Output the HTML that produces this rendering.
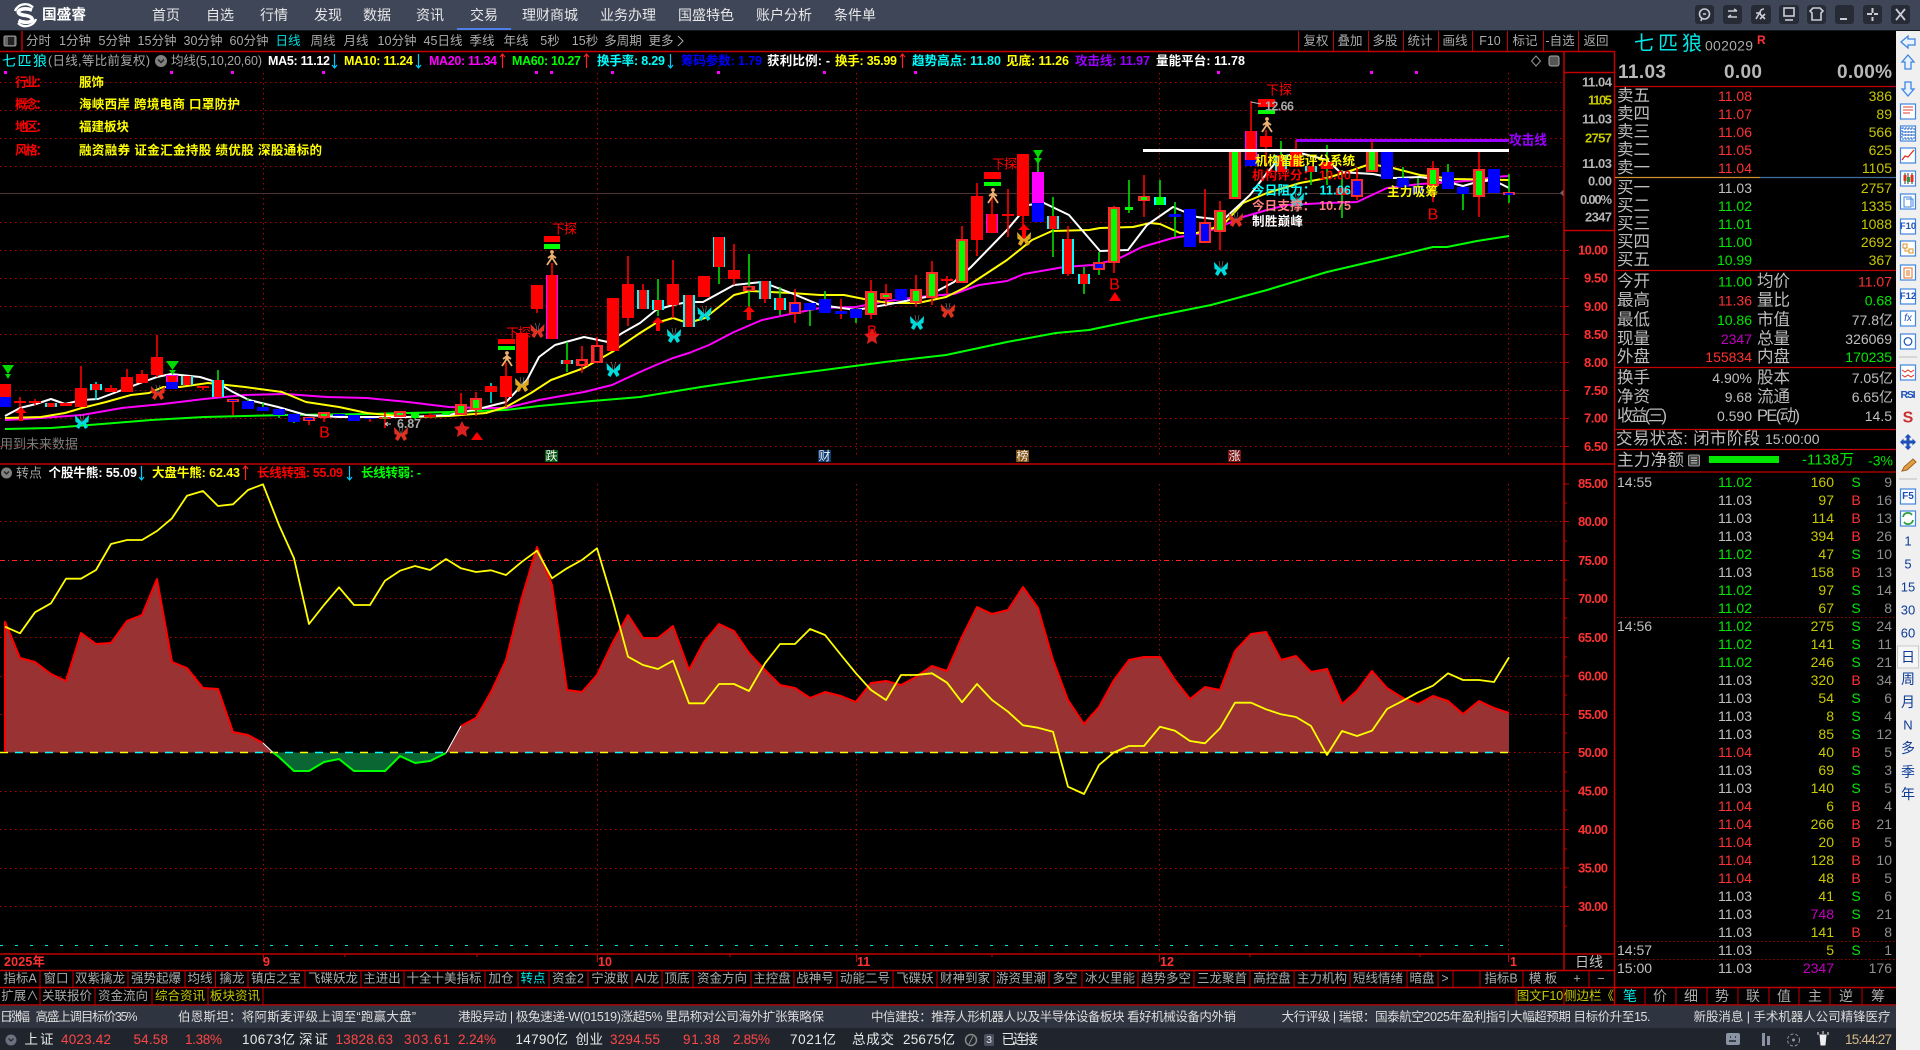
<!DOCTYPE html>
<html lang="zh"><head><meta charset="utf-8"><title>国盛睿</title>
<style>
html,body{margin:0;padding:0;background:#000;width:1920px;height:1050px;overflow:hidden}
svg{display:block;position:absolute;left:0;top:0}
text{font-family:"Liberation Sans","WenQuanYi Zen Hei","Noto Sans CJK SC",sans-serif;dominant-baseline:central;font-size:13px;fill:#bcbcbc}
.m{text-anchor:middle}.e{text-anchor:end}
.b{font-weight:bold}
.nav{font-size:14px;fill:#e8e8e8;text-anchor:middle}
.tb{font-size:12.5px;fill:#ababab;text-anchor:middle}
.hd{font-size:12.5px;font-weight:bold}
.ax{font-size:13px;font-weight:bold;fill:#ff3232;text-anchor:end}
.axg{font-size:13px;font-weight:bold;fill:#b4b4b4;text-anchor:end}
.axy{font-size:13px;font-weight:bold;fill:#c8c800;text-anchor:end}
.lb{font-size:16.5px;fill:#bdbdbd}
.n{font-size:14px;fill:#c0c0c0;text-anchor:end}
.nl{font-size:14px;fill:#c0c0c0}
.r{fill:#ff3232}.g{fill:#00e800}.y{fill:#c8c800}.p{fill:#c000c0}.c{fill:#00e8e8}.d{fill:#909090}
.tk{font-size:12.5px;fill:#dcdcdc}
.st{font-size:13.5px;fill:#e8e8e8}
.str{font-size:13.5px;fill:#ff4646}
.sb{font-size:13px;fill:#0c3c96;text-anchor:middle}
</style></head><body>
<svg width="1920" height="1050" viewBox="0 0 1920 1050" xmlns="http://www.w3.org/2000/svg">
<defs>
<g id="bf"><path d="M0 1L-7-6L-6.5 1L-4 2L-6 6L-3 8L0 3L3 8L6 6L4 2L6.500 1L7-6Z"/><path d="M-.5 1L-2-7M.5 1L2-7" stroke="#888" stroke-width=".6" fill="none"/></g>
<g id="pp" fill="none" stroke="#eeb070" stroke-width="1.800"><circle cx="0" cy="-6" r="1" fill="#eeb070"/><path d="M-5 7L-1 1L0-4L1 1L5 7M-4 0L0-3L4 0"/></g>
<path id="st" d="M0-8L2.500-3L8-2L4 2L5 8L0 5L-5 8L-4 2L-8-2L-2.500-3Z"/>
</defs>
<rect width="1920" height="1050" fill="#000"/>

<!-- title bar -->
<rect width="1920" height="30.500" fill="#3e4658"/>
<rect x="457" y="28" width="54" height="2.500" fill="#4d80e6"/>
<path d="M33 7.500A11 11 0 0 0 15 11M18 23A11 11 0 0 0 36 19" fill="none" stroke="#fff" stroke-width="2.400"/>
<path d="M32 10Q26 8 21 9.500Q17 11 19 13.500Q21 15 26 15.500Q31 16.500 32 18.500Q33 21 29 22Q24 23 18.500 20.500" fill="none" stroke="#fff" stroke-width="3.600"/>
<text x="42" y="15.500" font-size="14.500" class="b" style="font-size:14.500px;fill:#fff" textLength="44" lengthAdjust="spacingAndGlyphs">国盛睿</text>
<text x="166" y="15" class="nav">首页</text><text x="220" y="15" class="nav">自选</text><text x="274" y="15" class="nav">行情</text><text x="328" y="15" class="nav">发现</text><text x="377" y="15" class="nav">数据</text><text x="430" y="15" class="nav">资讯</text><text x="484" y="15" class="nav">交易</text><text x="550" y="15" class="nav">理财商城</text><text x="628" y="15" class="nav">业务办理</text><text x="706" y="15" class="nav">国盛特色</text><text x="784" y="15" class="nav">账户分析</text><text x="855" y="15" class="nav">条件单</text>
<g fill="#262b36"><rect x="1695" y="5" width="19" height="19" rx="3"/><rect x="1723" y="5" width="19" height="19" rx="3"/><rect x="1751" y="5" width="20" height="19" rx="3"/><rect x="1779" y="5" width="20" height="19" rx="3"/><rect x="1807" y="5" width="19" height="19" rx="3"/><rect x="1835" y="5" width="19" height="19" rx="3"/><rect x="1863" y="5" width="19" height="19" rx="3"/><rect x="1891" y="5" width="19" height="19" rx="3"/></g>
<g fill="none" stroke="#c8cdd6" stroke-width="1.600">
<circle cx="1704.500" cy="14" r="5"/><path d="M1702 18l-1 3M1703 14h3"/>
<path d="M1728 11h9M1734 9l3 2M1728 17h9M1731 15l-3 2"/>
<path d="M1756 19l4-7q1-3 4-3M1756 13h5M1760 14l5 5M1765 14l-5 5"/>
<rect x="1784" y="8" width="10" height="8"/><path d="M1785 20h8"/>
<path d="M1813 8l-3 3 2 2v7h9v-7l2-2-3-3h-7z"/>
<path d="M1840 19h7" stroke-width="2"/>
<path d="M1872.500 8v5M1872.500 17v4M1867 14h5M1874 14h4" stroke-width="2"/>
<path d="M1896 9l9 11M1905 9l-9 11" stroke-width="1.800"/>
</g>
<rect y="30" width="1920" height="1" fill="#15181f"/>

<!-- sidebar -->
<rect x="1896" y="31" width="24" height="1019" fill="#f0f0f0"/>

<!-- grid upper -->
<g stroke="#b40000" stroke-width="1" stroke-dasharray="1.500 3.500" fill="none">
<path d="M0 82.500H1564M0 110.500H1564M0 138.500H1564M0 166.500H1564M0 222.500H1564M0 250.500H1564M0 278.500H1564M0 306.500H1564M0 334.500H1564M0 362.500H1564M0 390.500H1564M0 418.500H1564M0 446.500H1564"/>
<path d="M263.500 73V456M597.500 73V456M856.500 73V456M1159.500 73V456M1508.500 73V456"/>
<path d="M0 521.500H1564M0 598.500H1564M0 637.500H1564M0 676.500H1564M0 714.500H1564M1509 752.500H1564M0 791.500H1564M0 829.500H1564M0 868.500H1564M0 906.500H1564"/>
<path d="M263.500 484V954M597.500 484V954M856.500 484V954M1159.500 484V954M1508.500 484V954"/>
</g>
<path d="M0 560.500H1564" stroke="#ff2020" stroke-dasharray="5 3 1 3"/>
<path d="M0 193.500H1564" stroke="#503232" stroke-width="1"/>
<path d="M1564 189l-4 4 4 4z" fill="#666"/>

<!-- MA lines -->
<g fill="none" stroke-width="2" stroke-linejoin="round">
<polyline stroke="#00ff00" points="5,429 51,428 102,424 151,420 204,417 286,415 367,414 449,412 506,410 539,406 592,401 640,397 701,387 762,378 824,370 885,362 946,355 1007,342 1056,333 1089,330 1146,318 1211,305 1267,290 1327,272 1387,258 1433,247 1447,247 1477,241 1509,236"/>
<polyline stroke="#ff00ff" points="5,420 41,418 82,415 122,408 163,404 204,399 245,395 286,394 327,397 367,398 408,402 449,407 482,408 506,408 539,400 584,392 612,385 640,372 656,365 673,358 689,353 709,345 734,332 762,320 795,313 820,308 856,307 881,302 918,297 954,294 979,285 1007,281 1024,274 1064,267 1093,265 1118,259 1142,247 1173,238 1203,233 1220,227 1243,217 1267,210 1287,205 1327,203 1357,202 1387,188 1420,184 1453,182 1477,180 1493,177 1509,176"/>
<polyline stroke="#ffff00" points="5,418 41,417 65,413 82,408 106,402 131,395 149,393 163,387 180,387 208,383 245,387 282,392 306,402 339,407 367,413 408,417 449,416 486,413 506,407 531,393 551,380 584,368 612,352 640,333 656,323 673,318 688,323 705,318 734,295 750,291 791,293 820,295 844,295 869,300 889,303 918,303 946,297 966,287 1007,260 1032,240 1052,231 1089,230 1100,228 1133,227 1150,223 1160,224 1180,233 1197,233 1223,225 1243,203 1267,193 1300,183 1327,178 1353,170 1370,164 1393,168 1420,175 1453,179 1509,180"/>
<polyline stroke="#ffffff" points="5,416 20,408 36,404 51,399 65,404 82,400 98,399 122,390 143,382 157,377 171,374 200,377 216,382 233,392 249,400 278,407 306,415 339,417 367,417 408,417 449,415 482,408 506,402 527,380 539,357 555,345 584,337 608,342 624,332 640,323 656,310 673,305 688,302 703,302 734,285 762,282 791,293 820,305 856,310 885,305 926,297 954,282 971,267 1007,230 1028,205 1044,203 1069,215 1100,251 1128,250 1147,225 1173,207 1197,217 1223,220 1250,195 1267,173 1280,157 1300,153 1327,160 1340,172 1373,174 1393,178 1420,177 1440,180 1463,186 1477,182 1493,180 1509,188"/>
</g>

<!-- wicks -->
<g fill="none" stroke-width="1.600">
<path stroke="#ff0000" d="M20 397V407M35 399V405M81 366V407M127 369V392M142 370V383M157 335V377M111 385V392M203 386V390M233 402V415M309 417V425M324 412V422M370 418V422M385 412V428M430 413V418M461 393V415M476 392V416M506 363V407M537 285V313M552 263V275M582 346V373M597 337V363M628 256V326M643 284V300M673 260V318M734 244V285M765 281V303M795 289V323M841 299V319M871 280V319M886 284V305M916 275V307M932 261V305M947 276V294M962 226V283M977 183V256M992 195V233M1008 189V237M1023 154V226M1068 226V276M1114 206V273M1144 175V217M1205 189V222M1220 201V250M1251 101V131M1266 130V167M1296 140V152M1357 168V200M1372 142V152M1433 161V202M1479 152V217"/>
<path stroke="#00e000" d="M218 370V380M248 398V401M263 403V407M279 415V418M294 422V423M415 418V419M567 342V372M658 279V316M719 267V284M749 254V307M780 287V315M810 310V326M825 291V299M856 318V323M1038 153V172M1053 197V257M1084 267V294M1099 252V275M1129 180V213M1160 180V197M1175 202V237M1311 172V185M1327 145V185M1342 170V218M1281 141V155M1403 167V178M1418 178V186M1448 164V172M1463 194V210M1509 174V203"/>
<path stroke="#00e8e8" d="M96 382V400M491 383V403"/>
</g>

<!-- bodies -->
<g fill="none" stroke-width="12">
<path stroke="#ff0000" d="M5 384V397M20 401V403M35 401V403M66 403V406M81 388V407M111 388V392M127 377V392M142 374V383M157 357V375M203 386V388M430 415V417M491 386V392M506 376V397M522 333V373M537 285V309M613 298V351M628 284V318M673 284V305M704 276V297M734 270V279M947 279V281M977 196V240M1008 214V216M1023 154V216M1266 136V147M1296 151V167M1327 162V169M1342 188V195"/>
<path stroke="#00ffff" d="M51 403V407M96 384V390M187 376V385M218 380V397M567 360V364M643 290V309M658 300V310M689 295V327M719 237V267M765 281V299M780 298V310M1053 216V229M1068 239V274M1084 274V284M1160 197V205M1281 155V172M1311 166V172"/>
<path stroke="#ff0000" stroke-width="8" d="M51 403V407M96 384V390M187 376V385M218 380V397M567 360V364M643 290V309M658 300V310M689 295V327M765 281V299M780 298V310M1053 216V229M1068 239V274M1084 274V284M1281 155V172M1311 166V172"/>
<path stroke="#ff0000" stroke-width="10" d="M719 237V267"/>
<path stroke="#00ff00" stroke-width="8" d="M415 413V418M446 412V415M1129 207V210M1160 197V205"/>
<path stroke="#ff2a2a" d="M324 412V418M385 417V419M400 411V417M461 404V415M476 398V410M582 359V366M597 345V363M749 286V291M871 291V315M886 293V299M916 289V303M932 272V298M962 239V283M1114 207V263M1144 196V201M1220 210V232M1235 150V199M1372 152V172M1433 168V186M1479 169V197"/>
<path stroke="#00ff00" stroke-width="6" d="M324 414V416M385 417.500V418.500M400 413V415M461 406V413M476 400V408M871 293V313M886 295V297M916 291V301M932 274V296M962 241V281M1114 209V261M1144 197V200M1220 212V230M1235 150V197M1372 152V170M1433 170V184M1479 171V195"/>
<path stroke="#000" stroke-width="5" d="M582 361V364M597 347V361M749 287.500V289.500"/>
<path stroke="#0000ff" d="M5 397V407M172 382V389M248 401V409M263 407V411M279 409V415M294 414V422M339 414V416M354 415V421M370 418V419M810 303V310M825 299V313M841 311V314M856 309V318M901 289V300M1038 203V222M1175 214V217M1190 209V247M1251 160V166M1387 152V179M1403 178V187M1418 186V194M1448 172V189M1463 187V194M1494 169V193"/>
<path stroke="#ff2a2a" d="M233 399V402M309 417V421M795 302V314M1099 262V270M1205 222V243M1357 179V197M1509 192V195"/>
<path stroke="#0000ff" stroke-width="8" d="M233 400V401M309 418V420M795 304V312M1099 264V268M1205 224V241M1357 181V195M1509 193V195"/>
<path stroke="#ff00ff" d="M172 375V382M552 275V339M992 214V233M1038 172V203M1251 131V160"/>
<path stroke="#ff0000" stroke-width="9.500" d="M172 376V382M552 275V339M992 214V233M1251 131V160"/>
</g>

<!-- overlays upper -->
<rect x="1143" y="149" width="366" height="3" fill="#fff"/>
<rect x="1296" y="139" width="213" height="3" fill="#9900ff"/>
<path d="M1296 140v9M1372 140v9" stroke="#ff0000"/>
<text x="1509" y="140" font-weight="bold" style="font-size:14px;fill:#9900ff" textLength="38" lengthAdjust="spacingAndGlyphs">攻击线</text>
<g fill="#ff0000"><rect x="544" y="236" width="16" height="6"/><rect x="498" y="339" width="17" height="5"/><rect x="984" y="172" width="17" height="7"/><rect x="1258" y="99" width="17" height="8"/></g>
<g fill="#00ff00"><rect x="544" y="244" width="16" height="5"/><rect x="498" y="346" width="17" height="4"/><rect x="984" y="182" width="17" height="4"/><rect x="1258" y="110" width="17" height="4"/></g>
<use href="#pp" x="552" y="258"/><use href="#pp" x="507" y="359"/><use href="#pp" x="993" y="196"/><use href="#pp" x="1267" y="125"/>
<g style="fill:#f00"><text x="552" y="229" style="font-size:13px;fill:#f00" textLength="25">下探</text><text x="506" y="333" style="font-size:13px;fill:#f00" textLength="25">下探</text><text x="992" y="164" style="font-size:13px;fill:#f00" textLength="25">下探</text><text x="1266" y="90" style="font-size:13px;fill:#f00" textLength="26">下探</text></g>
<path d="M1251 102l10 2" stroke="#bbb"/><text x="1265" y="106.500" class="b" style="font-size:12.500px;fill:#aaa" textLength="29">12.66</text>
<path d="M385 424h6M385 424l3-2M385 424l3 2" stroke="#ccc" fill="none"/><text x="397" y="424" class="b" style="font-size:12.500px;fill:#aaa" textLength="24">6.87</text>
<text x="0" y="444" style="font-size:13px;fill:#7c7c7c" textLength="78">用到未来数据</text>
<g fill="#00dcdc"><use href="#bf" x="82" y="421"/><use href="#bf" x="613.500" y="369"/><use href="#bf" x="674" y="335"/><use href="#bf" x="704.500" y="313"/><use href="#bf" x="917" y="322"/><use href="#bf" x="1221" y="268"/><use href="#bf" x="1297" y="199"/></g>
<g fill="#e03020"><use href="#bf" x="158" y="392"/><use href="#bf" x="401" y="433"/><use href="#bf" x="537.500" y="330"/><use href="#bf" x="948" y="310"/><use href="#bf" x="1236" y="219"/></g>
<g fill="#e0a820"><use href="#bf" x="522" y="384"/><use href="#bf" x="1024" y="238"/></g>
<g fill="#d82020"><use href="#st" x="462" y="429"/><use href="#st" x="872" y="336"/></g>
<path d="M15 413l6-6 6 6h-4v8h-4v-8zM652 323l6-6 6 6h-4v8h-4v-8zM743 312l6-6 6 6h-4v8h-4v-8zM1018 230l6-6 6 6h-4v8h-4v-8zM471 440l6-8 6 8zM1109 301l6-9 6 9z" fill="#f00"/>
<path d="M2 365h12l-6 9zM5 374h6l-3 5zM166 361h13l-6.500 9zM169 370h7l-3.500 5zM1033 150h10l-5 8zM1034 158h8l-4 6z" fill="#00d800"/>
<text x="324.500" y="433" class="m" style="font-size:16px;fill:#f00">B</text><text x="872" y="331" class="m" style="font-size:15px;fill:#f00">B</text><text x="1114.500" y="285" class="m" style="font-size:16px;fill:#f00">B</text><text x="1433" y="215" class="m" style="font-size:16px;fill:#f00">B</text>
<text x="1255" y="161" class="b" style="font-size:12.500px;fill:#ff0" textLength="100">机构智能评分系统</text>
<text x="1252" y="175.500" class="b" style="font-size:12.500px;fill:#f00" textLength="99">机构评分： 10.00</text>
<text x="1252" y="190.500" class="b" style="font-size:12.500px;fill:#0ff" textLength="99">今日阻力： 11.06</text>
<text x="1252" y="206" class="b" style="font-size:12.500px;fill:#ff8080" textLength="99">今日支撑： 10.75</text>
<text x="1252" y="221.500" class="b" style="font-size:12.500px;fill:#fff" textLength="51">制胜巅峰</text>
<text x="1387" y="192" class="b" style="font-size:12.500px;fill:#ff0" textLength="51">主力吸筹</text>
<g><rect x="545" y="450" width="13" height="12" fill="#0a5a14"/><rect x="818" y="450" width="13" height="12" fill="#0a3a70"/><rect x="1016" y="450" width="13" height="12" fill="#80500e"/><rect x="1228" y="450" width="13" height="12" fill="#7a1010"/></g>
<g style="font-size:12px"><text x="551.500" y="456" class="m" style="font-size:12px;fill:#eee">跌</text><text x="824.500" y="456" class="m" style="font-size:12px;fill:#eee">财</text><text x="1022.500" y="456" class="m" style="font-size:12px;fill:#eee">榜</text><text x="1234.500" y="456" class="m" style="font-size:12px;fill:#eee">涨</text></g>
<path d="M4 71h3v3H4zM170 71h3v3h-3zM231 71h3v3h-3zM322 71h3v3h-3zM535 71h3v3h-3zM550 71h3v3h-3zM611 71h3v3h-3zM717 71h3v3h-3zM823 71h3v3h-3zM914 71h3v3h-3zM1217 71h3v3h-3zM1370 71h3v3h-3zM1415 71h3v3h-3z" fill="#f0f"/>

<!-- chart info text -->
<g class="hd">
<text x="15" y="82.500" class="hd" style="fill:#f00" textLength="33">行业：</text><text x="79" y="82.500" class="hd" style="fill:#ff0" textLength="25">服饰</text>
<text x="15" y="104.500" class="hd" style="fill:#f00" textLength="33">概念：</text><text x="79" y="104.500" class="hd" style="fill:#ff0" textLength="161">海峡西岸 跨境电商 口罩防护</text>
<text x="15" y="127" class="hd" style="fill:#f00" textLength="33">地区：</text><text x="79" y="127" class="hd" style="fill:#ff0" textLength="50">福建板块</text>
<text x="15" y="150.500" class="hd" style="fill:#f00" textLength="33">风格：</text><text x="79" y="150.500" class="hd" style="fill:#ff0" textLength="243">融资融券 证金汇金持股 绩优股 深股通标的</text>
</g>

<!-- header row -->
<text x="2" y="61" style="font-size:14px;fill:#0ff" textLength="45">七匹狼</text>
<text x="48" y="61" style="font-size:12.500px;fill:#a8a8a8" textLength="102">(日线,等比前复权)</text>
<circle cx="161" cy="61" r="6" fill="#808080"/><path d="M158 59.500l3 3 3-3" stroke="#222" stroke-width="1.500" fill="none"/>
<text x="171" y="61" style="font-size:12.500px;fill:#a8a8a8" textLength="91">均线(5,10,20,60)</text>
<text x="268" y="61" class="hd" style="fill:#fff" textLength="62">MA5: 11.12</text>
<text x="344" y="61" class="hd" style="fill:#ff0" textLength="69">MA10: 11.24</text>
<text x="429" y="61" class="hd" style="fill:#f0f" textLength="68">MA20: 11.34</text>
<text x="512" y="61" class="hd" style="fill:#0f0" textLength="69">MA60: 10.27</text>
<text x="597" y="61" class="hd" style="fill:#0ff" textLength="68">换手率: 8.29</text>
<text x="681" y="61" class="hd" style="fill:#0000ff" textLength="81">筹码参数: 1.79</text>
<text x="767" y="61" class="hd" style="fill:#fff" textLength="63">获利比例: -</text>
<text x="835" y="61" class="hd" style="fill:#ff0" textLength="62">换手: 35.99</text>
<text x="912" y="61" class="hd" style="fill:#0ff" textLength="89">趋势高点: 11.80</text>
<text x="1006" y="61" class="hd" style="fill:#ff0" textLength="63">见底: 11.26</text>
<text x="1075" y="61" class="hd" style="fill:#9900ff" textLength="75">攻击线: 11.97</text>
<text x="1156" y="61" class="hd" style="fill:#fff" textLength="89">量能平台: 11.78</text>
<g fill="none" stroke-width="1.200">
<path stroke="#0cf" d="M334.500 54V68M332 65l2.500 3 2.500-3M418.500 54V68M416 65l2.500 3 2.500-3M670.500 54V68M668 65l2.500 3 2.500-3M141.500 466V480M139 477l2.500 3 2.500-3M349.500 466V480M347 477l2.500 3 2.500-3"/>
<path stroke="#f22" d="M502.500 54V68M500 57l2.500-3 2.500 3M586.500 54V68M584 57l2.500-3 2.500 3M902.500 54V68M900 57l2.500-3 2.500 3M245.500 466V480M243 469l2.500-3 2.500 3"/>
</g>
<path d="M1536 56l4.500 5-4.500 5-4.500-5z" fill="none" stroke="#999"/><rect x="1549" y="56" width="10" height="10" rx="2" fill="#555" stroke="#aaa"/>

<!-- toolbar -->
<rect x="4" y="36" width="12" height="10" rx="1.500" fill="#666" stroke="#999"/><rect x="8" y="37" width="6" height="8" fill="#222"/>
<path d="M22 31V51" stroke="#c40000" stroke-width="1.500"/>
<text x="38.500" y="41" class="tb">分时</text><text x="75" y="41" class="tb">1分钟</text><text x="114.500" y="41" class="tb">5分钟</text><text x="157" y="41" class="tb">15分钟</text><text x="203" y="41" class="tb">30分钟</text><text x="249" y="41" class="tb">60分钟</text><text x="288" y="41" class="tb" style="fill:#00e0e0">日线</text><text x="323" y="41" class="tb">周线</text><text x="356" y="41" class="tb">月线</text><text x="397" y="41" class="tb">10分钟</text><text x="443" y="41" class="tb">45日线</text><text x="482" y="41" class="tb">季线</text><text x="516" y="41" class="tb">年线</text><text x="550" y="41" class="tb">5秒</text><text x="585" y="41" class="tb">15秒</text><text x="623" y="41" class="tb">多周期</text><text x="661" y="41" class="tb">更多</text><path d="M678 36l5 5-5 5" fill="none" stroke="#aaa"/>
<text x="1316" y="41" class="tb">复权</text><text x="1350" y="41" class="tb">叠加</text><text x="1385" y="41" class="tb">多股</text><text x="1420" y="41" class="tb">统计</text><text x="1455" y="41" class="tb">画线</text><text x="1490" y="41" class="tb">F10</text><text x="1525" y="41" class="tb">标记</text><text x="1560" y="41" class="tb">-自选</text><text x="1596" y="41" class="tb">返回</text>
<path d="M1298.500 31V51M1333.500 31V51M1368.500 31V51M1403.500 31V51M1438.500 31V51M1472.500 31V51M1507.500 31V51M1543.500 31V51M1578.500 31V51" stroke="#c40000"/>

<!-- lower indicator -->
<polygon fill="#993232" points="5,752.500 5,621.700 20,658 35,662 51,674 66,681 81,633 96,644 111,643 127,621 142,615 157,579 172,662 187,668 203,688 218,689 233,732 248,735 263,743 273,752.500"/>
<polygon fill="#993232" points="446,752.500 461,726 476,718 491,692 506,660 522,597 537,547 552,585 567,690 582,692 597,675 613,642 628,615 643,638 658,638 673,626 689,670 704,642 719,624 734,631 749,653 765,670 780,685 795,688 810,698 825,692 841,696 856,702 871,683 886,681 901,685 916,677 932,666 947,671 962,637 977,607 992,614 1008,610 1023,587 1038,608 1053,660 1068,700 1084,724 1099,707 1114,680 1129,660 1144,657 1160,657 1175,680 1190,699 1205,687 1220,690 1235,651 1251,634 1266,632 1281,660 1296,656 1311,672 1327,669 1342,704 1357,691 1372,671 1387,688 1403,698 1418,704 1433,696 1448,701 1463,714 1479,701 1494,708 1509,713 1509,752.500"/>
<polygon fill="#0a6632" points="273,752.500 279,757 294,771 309,771 324,762 339,759 354,771 370,771 385,771 400,756 415,763 430,761 446,753"/>
<path d="M0 752.500H1509" stroke="#ffff00" stroke-width="1.500" stroke-dasharray="8 22"/>
<path d="M15 752.500H1509" stroke="#00ffff" stroke-width="1.500" stroke-dasharray="8 22"/>
<path d="M0 945.500H1509" stroke="#00e0e0" stroke-dasharray="3 12"/>
<g fill="none" stroke-width="2" stroke-linejoin="round">
<polyline stroke="#ff0000" points="5,752 5,621.700 20,658 35,662 51,674 66,681 81,633 96,644 111,643 127,621 142,615 157,579 172,662 187,668 203,688 218,689 233,732 248,735 263,743"/>
<polyline stroke="#ff0000" points="461,726 476,718 491,692 506,660 522,597 537,547 552,585 567,690 582,692 597,675 613,642 628,615 643,638 658,638 673,626 689,670 704,642 719,624 734,631 749,653 765,670 780,685 795,688 810,698 825,692 841,696 856,702 871,683 886,681 901,685 916,677 932,666 947,671 962,637 977,607 992,614 1008,610 1023,587 1038,608 1053,660 1068,700 1084,724 1099,707 1114,680 1129,660 1144,657 1160,657 1175,680 1190,699 1205,687 1220,690 1235,651 1251,634 1266,632 1281,660 1296,656 1311,672 1327,669 1342,704 1357,691 1372,671 1387,688 1403,698 1418,704 1433,696 1448,701 1463,714 1479,701 1494,708 1509,713"/>
<polyline stroke="#00ff00" points="273,752.500 279,757 294,771 309,771 324,762 339,759 354,771 370,771 385,771 400,756 415,763 430,761 446,753"/>
<polyline stroke="#ffff00" stroke-width="1.800" points="5,626.700 20,633.300 35,612.300 51,603.300 66,578.700 81,578.700 96,570 111,544 127,540 142,540 157,531 172,518.300 187,495.700 203,491 218,506 233,504.300 248,490 263,484.300 279,525 294,558.300 309,624 324,605 339,587.300 354,605 370,605 385,580.700 400,570.700 415,566 430,570 446,559 461,568.300 476,572 491,570.300 506,575 522,561.700 537,550.700 552,578.300 567,568.300 582,560 597,548.300 613,601.700 628,656.700 643,665 658,669 673,660.700 689,703.300 704,703.300 719,684 734,684 749,691 765,663.300 780,644 795,644 810,629 825,635 841,655 856,673.300 871,690 886,700 901,675 916,675 932,673.300 947,682.700 962,702.300 977,684 992,700 1008,711.700 1023,725.300 1038,727.700 1053,731.700 1068,786.700 1084,794 1099,765 1114,752.300 1129,746 1144,746 1160,726.700 1175,730.700 1190,741 1205,743.300 1220,728.300 1235,702.700 1251,702.700 1266,709.300 1281,714.300 1296,717 1311,726 1327,755 1342,731 1357,736 1372,730.700 1387,709 1403,700.700 1418,692.300 1433,685.700 1448,673.300 1463,680 1479,680 1494,682 1509,657.300"/>
<path d="M263 743L273 752.500M446 753L461 726" stroke="#fff" stroke-width="1"/>
</g>
<circle cx="6.500" cy="473" r="5.500" fill="#808080"/><path d="M4 471.500l2.500 2.500 2.500-2.500" stroke="#222" stroke-width="1.300" fill="none"/>
<text x="16" y="473" style="font-size:13px;fill:#a8a8a8" textLength="26">转点</text>
<text x="48.500" y="473" class="hd" style="fill:#fff" textLength="88.500">个股牛熊: 55.09</text>
<text x="152" y="473" class="hd" style="fill:#ff0" textLength="88">大盘牛熊: 62.43</text>
<text x="257" y="473" class="hd" style="fill:#f00" textLength="86">长线转强: 55.09</text>
<text x="361" y="473" class="hd" style="fill:#0f0" textLength="60">长线转弱: -</text>

<!-- red frame lines -->
<g stroke="#c40000" fill="none">
<path d="M0 51.500H1615" stroke-width="1.500"/>
<path d="M0 464H1615" stroke-width="1.500"/>
<path d="M1564 51V970" stroke-width="1.500"/>
<path d="M1614.500 51V1005" stroke-width="1.500"/>
<path d="M1564 72.500H1615M1564 230.500H1615" stroke-width="1.500"/>
<path d="M0 954H1615" stroke-width="1.500"/>
<path d="M0 970.500H1615M0 987.500H1896M0 1005H1896" stroke-width="1.500"/>
<path d="M1615 86.500H1896M1615 270.500H1896M1615 367.500H1896M1615 429.500H1896M1615 449.500H1896M1615 472H1896" stroke-width="1.200"/>
<path d="M1617 617.500H1896M1617 941.500H1896M1617 959.500H1896" stroke="#a00000" stroke-dasharray="1.500 2.500"/>
<path d="M1564 250.500h5M1564 278.500h5M1564 306.500h5M1564 334.500h5M1564 362.500h5M1564 390.500h5M1564 418.500h5M1564 446.500h5M1564 484h5M1564 521.500h5M1564 560.500h5M1564 598.500h5M1564 637.500h5M1564 676h5M1564 714.500h5M1564 752.500h5M1564 791h5M1564 829.500h5M1564 868h5M1564 906.500h5M1564 503h3M1564 541h3M1564 580h3M1564 618h3M1564 657h3M1564 695h3M1564 733h3M1564 772h3M1564 810h3M1564 849h3M1564 887h3M1564 926h3"/>
<path d="M263.500 954v8M597.500 954v8M856.500 954v8M1159.500 954v8M1508.500 954v8M345 954v3M477 954v3M730 954v3M992 954v3M1250 954v3M1420 954v3"/>
<path d="M40 970.500V987M73 970.500V987M128 970.500V987M185 970.500V987M215.500 970.500V987M248 970.500V987M305 970.500V987M361 970.500V987M404 970.500V987M485 970.500V987M518 970.500V987M549 970.500V987M588 970.500V987M632 970.500V987M662 970.500V987M693 970.500V987M751 970.500V987M794 970.500V987M837 970.500V987M893 970.500V987M937 970.500V987M994 970.500V987M1049 970.500V987M1082 970.500V987M1138 970.500V987M1194 970.500V987M1250 970.500V987M1294 970.500V987M1350 970.500V987M1407 970.500V987M1438 970.500V987M1453 970.500V987M1480 970.500V987M1523 970.500V987M1589 970.500V987"/>
<path d="M40 987V1005M95 987V1005M152 987V1005M208 987V1005M263 987V1005M1516 987V1005M1564 987V1005M1645 987V1005M1676 987V1005M1707 987V1005M1738 987V1005M1769 987V1005M1799 987V1005M1830 987V1005M1862 987V1005"/>
</g>
<path d="M1615 177.500H1760" stroke="#d09030" stroke-width="1.200"/><path d="M1760 177.500H1896" stroke="#4070a0" stroke-width="1.200"/>

<!-- axis labels -->
<text x="1612" y="82" class="axg" textLength="30">11.04</text><text x="1612" y="100" class="axy" textLength="24">1105</text><text x="1612" y="119" class="axg" textLength="30">11.03</text><text x="1612" y="138" class="axy" textLength="27">2757</text><text x="1612" y="163.500" class="axg" textLength="30">11.03</text><text x="1612" y="181" class="axg" textLength="24">0.00</text><text x="1612" y="199.500" class="axg" textLength="32">0.00%</text><text x="1612" y="217" class="axg" textLength="27">2347</text>
<g>
<text x="1608" y="250" class="ax" textLength="30">10.00</text><text x="1608" y="278" class="ax" textLength="24">9.50</text><text x="1608" y="306.500" class="ax" textLength="24">9.00</text><text x="1608" y="334.500" class="ax" textLength="24">8.50</text><text x="1608" y="362.500" class="ax" textLength="24">8.00</text><text x="1608" y="390.500" class="ax" textLength="24">7.50</text><text x="1608" y="418" class="ax" textLength="24">7.00</text><text x="1608" y="446.500" class="ax" textLength="24">6.50</text>
<text x="1608" y="483.500" class="ax" textLength="30">85.00</text><text x="1608" y="521.500" class="ax" textLength="30">80.00</text><text x="1608" y="560.500" class="ax" textLength="30">75.00</text><text x="1608" y="598.500" class="ax" textLength="30">70.00</text><text x="1608" y="637.500" class="ax" textLength="30">65.00</text><text x="1608" y="676" class="ax" textLength="30">60.00</text><text x="1608" y="714.500" class="ax" textLength="30">55.00</text><text x="1608" y="752.500" class="ax" textLength="30">50.00</text><text x="1608" y="791" class="ax" textLength="30">45.00</text><text x="1608" y="829.500" class="ax" textLength="30">40.00</text><text x="1608" y="868" class="ax" textLength="30">35.00</text><text x="1608" y="906.500" class="ax" textLength="30">30.00</text>
</g>
<text x="4" y="962" class="b" style="font-size:12.500px;fill:#ff3232" textLength="41">2025年</text><text x="263" y="962" class="b" style="font-size:12.500px;fill:#ff3232">9</text><text x="598" y="962" class="b" style="font-size:12.500px;fill:#ff3232">10</text><text x="857" y="962" class="b" style="font-size:12.500px;fill:#ff3232">11</text><text x="1160" y="962" class="b" style="font-size:12.500px;fill:#ff3232">12</text><text x="1510" y="962" class="b" style="font-size:12.500px;fill:#ff3232">1</text>
<text x="1589" y="962" class="m" style="font-size:14px;fill:#c0c0c0">日线</text>

<!-- tabs -->
<g>
<text x="20" y="978.500" class="tb">指标A</text><text x="56" y="978.500" class="tb">窗口</text><text x="100" y="978.500" class="tb">双紫擒龙</text><text x="156" y="978.500" class="tb">强势起爆</text><text x="200" y="978.500" class="tb">均线</text><text x="232" y="978.500" class="tb">擒龙</text><text x="276" y="978.500" class="tb">镇店之宝</text><text x="333" y="978.500" class="tb">飞碟妖龙</text><text x="382" y="978.500" class="tb">主进出</text><text x="444" y="978.500" class="tb">十全十美指标</text><text x="501" y="978.500" class="tb">加仓</text><text x="533" y="978.500" class="tb" style="fill:#00e8e8">转点</text><text x="568" y="978.500" class="tb">资金2</text><text x="610" y="978.500" class="tb">宁波敢</text><text x="647" y="978.500" class="tb">AI龙</text><text x="677" y="978.500" class="tb">顶底</text><text x="722" y="978.500" class="tb">资金方向</text><text x="772" y="978.500" class="tb">主控盘</text><text x="815" y="978.500" class="tb">战神号</text><text x="865" y="978.500" class="tb">动能二号</text><text x="915" y="978.500" class="tb">飞碟妖</text><text x="965" y="978.500" class="tb">财神到家</text><text x="1021" y="978.500" class="tb">游资里潮</text><text x="1065" y="978.500" class="tb">多空</text><text x="1110" y="978.500" class="tb">冰火里能</text><text x="1166" y="978.500" class="tb">趋势多空</text><text x="1222" y="978.500" class="tb">三龙聚首</text><text x="1272" y="978.500" class="tb">高控盘</text><text x="1322" y="978.500" class="tb">主力机构</text><text x="1378" y="978.500" class="tb">短线情绪</text><text x="1422" y="978.500" class="tb">暗盘</text><text x="1445" y="978.500" class="tb">&gt;</text><text x="1501" y="978.500" class="tb">指标B</text><text x="1543" y="978.500" class="tb">模 板</text><text x="1577" y="978.500" class="tb">+</text><text x="1601" y="978.500" class="tb">−</text>
<text x="20" y="996" class="tb">扩展∧</text><text x="67" y="996" class="tb">关联报价</text><text x="123" y="996" class="tb">资金流向</text><text x="180" y="996" class="tb" style="fill:#c8c800">综合资讯</text><text x="235" y="996" class="tb" style="fill:#c8c800">板块资讯</text>
<text x="1540" y="996" class="tb" style="fill:#c8c800">图文F10</text><text x="1589" y="996" class="tb" style="fill:#c8c800">侧边栏《</text>
<text x="1630" y="996" class="tb" style="fill:#00e8e8;font-size:14px">笔</text><text x="1660" y="996" class="tb" style="font-size:14px">价</text><text x="1691" y="996" class="tb" style="font-size:14px">细</text><text x="1722" y="996" class="tb" style="font-size:14px">势</text><text x="1753" y="996" class="tb" style="font-size:14px">联</text><text x="1784" y="996" class="tb" style="font-size:14px">值</text><text x="1815" y="996" class="tb" style="font-size:14px">主</text><text x="1846" y="996" class="tb" style="font-size:14px">逆</text><text x="1878" y="996" class="tb" style="font-size:14px">筹</text>
</g>

<!-- ticker + status -->
<rect y="1005.500" width="1896" height="22.500" fill="#2f3540"/>
<rect y="1028" width="1896" height="22" fill="#20252d"/>
<text x="0" y="1017" class="tk" textLength="30">日涨幅</text><text x="35.500" y="1017" class="tk" textLength="102">高盛上调目标价35%</text>
<text x="178" y="1017" class="tk" textLength="238">伯恩斯坦：将阿斯麦评级上调至“跑赢大盘”</text>
<text x="458" y="1017" class="tk" textLength="366">港股异动 | 极兔速递-W(01519)涨超5% 里昂称对公司海外扩张策略保</text>
<text x="871" y="1017" class="tk" textLength="365">中信建投：推荐人形机器人以及半导体设备板块 看好机械设备内外销</text>
<text x="1281.500" y="1017" class="tk" textLength="369">大行评级 | 瑞银：国泰航空2025年盈利指引大幅超预期 目标价升至15.</text>
<text x="1693.500" y="1017" class="tk" textLength="197">新股消息 | 手术机器人公司精锋医疗</text>

<circle cx="11" cy="1040" r="5.500" fill="#6a7280"/><path d="M8.500 1038.500l2.500 2.500 2.500-2.500" stroke="#222" stroke-width="1.200" fill="none"/>
<text x="24.500" y="1039.500" class="st" textLength="29">上证</text><text x="61" y="1039.500" class="str" textLength="50">4023.42</text><text x="133.500" y="1039.500" class="str" textLength="34.500">54.58</text><text x="185" y="1039.500" class="str" textLength="37">1.38%</text><text x="242" y="1039.500" class="st" textLength="53">10673亿</text>
<text x="299" y="1039.500" class="st" textLength="29">深证</text><text x="335.500" y="1039.500" class="str" textLength="57.500">13828.63</text><text x="404" y="1039.500" class="str" textLength="46">303.61</text><text x="458" y="1039.500" class="str" textLength="38">2.24%</text><text x="515.500" y="1039.500" class="st" textLength="52.500">14790亿</text>
<text x="575.500" y="1039.500" class="st" textLength="27.500">创业</text><text x="610" y="1039.500" class="str" textLength="50">3294.55</text><text x="683" y="1039.500" class="str" textLength="37">91.38</text><text x="733" y="1039.500" class="str" textLength="37">2.85%</text><text x="790" y="1039.500" class="st" textLength="46">7021亿</text>
<text x="852" y="1039.500" class="st" textLength="42">总成交</text><text x="903" y="1039.500" class="st" textLength="52">25675亿</text>
<circle cx="971" cy="1040" r="5.500" fill="none" stroke="#888" stroke-width="1.500"/><path d="M969 1044l4-8" stroke="#888"/>
<rect x="984" y="1034" width="10" height="12" rx="2" fill="#4a5060"/><text x="989" y="1040" class="m" style="font-size:10.500px;fill:#ddd">3</text>
<text x="1001.500" y="1039.500" class="st" textLength="36.500">已连接</text>
<g fill="#8a93a3"><rect x="1726" y="1033" width="14" height="12" rx="2"/><rect x="1762" y="1033" width="3" height="13"/><rect x="1767" y="1036" width="3" height="9"/></g>
<path d="M1730 1037h1M1735 1037h1M1729 1041h7" stroke="#20252d" stroke-width="1.500"/>
<circle cx="1793.500" cy="1040" r="6" fill="none" stroke="#8a93a3" stroke-dasharray="3 2"/><circle cx="1793.500" cy="1040" r="1.500" fill="#8a93a3"/>
<path d="M1820 1035h6l-1 10h-4zM1818 1032v3M1823 1031v3M1828 1032v3" stroke="#eee" fill="#eee"/>
<text x="1845" y="1039.500" class="st" style="fill:#d9b88a" textLength="47">15:44:27</text>

<!-- right panel header -->
<text x="1634" y="44" style="font-size:20px;fill:#00e8e8" textLength="68">七匹狼</text>
<text x="1705" y="45.500" style="font-size:14px;fill:#aaa" textLength="48">002029</text>
<text x="1757" y="40" class="b" style="font-size:12px;fill:#f33">R</text>
<text x="1618" y="72.500" class="b" style="font-size:19px;fill:#b8b8b8" textLength="48">11.03</text>
<text x="1724" y="72.500" class="b" style="font-size:19px;fill:#b8b8b8" textLength="38">0.00</text>
<text x="1837" y="72.500" class="b" style="font-size:19px;fill:#b8b8b8" textLength="55">0.00%</text>

<!-- order book -->
<text x="1617" y="96" class="lb">卖五</text><text x="1752" y="96" class="n r">11.08</text><text x="1892" y="96" class="n y">386</text>
<text x="1617" y="114" class="lb">卖四</text><text x="1752" y="114" class="n r">11.07</text><text x="1892" y="114" class="n y">89</text>
<text x="1617" y="132" class="lb">卖三</text><text x="1752" y="132" class="n r">11.06</text><text x="1892" y="132" class="n y">566</text>
<text x="1617" y="150" class="lb">卖二</text><text x="1752" y="150" class="n r">11.05</text><text x="1892" y="150" class="n y">625</text>
<text x="1617" y="168" class="lb">卖一</text><text x="1752" y="168" class="n r">11.04</text><text x="1892" y="168" class="n y">1105</text>
<text x="1617" y="188" class="lb">买一</text><text x="1752" y="188" class="n">11.03</text><text x="1892" y="188" class="n y">2757</text>
<text x="1617" y="206" class="lb">买二</text><text x="1752" y="206" class="n g">11.02</text><text x="1892" y="206" class="n y">1335</text>
<text x="1617" y="224" class="lb">买三</text><text x="1752" y="224" class="n g">11.01</text><text x="1892" y="224" class="n y">1088</text>
<text x="1617" y="242" class="lb">买四</text><text x="1752" y="242" class="n g">11.00</text><text x="1892" y="242" class="n y">2692</text>
<text x="1617" y="260" class="lb">买五</text><text x="1752" y="260" class="n g">10.99</text><text x="1892" y="260" class="n y">367</text>

<text x="1617" y="281.500" class="lb">今开</text><text x="1752" y="281.500" class="n g">11.00</text><text x="1757" y="281.500" class="lb">均价</text><text x="1892" y="281.500" class="n r">11.07</text>
<text x="1617" y="300.500" class="lb">最高</text><text x="1752" y="300.500" class="n r">11.36</text><text x="1757" y="300.500" class="lb">量比</text><text x="1892" y="300.500" class="n g">0.68</text>
<text x="1617" y="320" class="lb">最低</text><text x="1752" y="320" class="n g">10.86</text><text x="1757" y="320" class="lb">市值</text><text x="1893" y="320" class="n">77.8亿</text>
<text x="1617" y="339" class="lb">现量</text><text x="1752" y="339" class="n p">2347</text><text x="1757" y="339" class="lb">总量</text><text x="1892" y="339" class="n">326069</text>
<text x="1617" y="357" class="lb">外盘</text><text x="1752" y="357" class="n r">155834</text><text x="1757" y="357" class="lb">内盘</text><text x="1892" y="357" class="n g">170235</text>
<text x="1617" y="378" class="lb">换手</text><text x="1752" y="378" class="n">4.90%</text><text x="1757" y="378" class="lb">股本</text><text x="1893" y="378" class="n">7.05亿</text>
<text x="1617" y="397" class="lb">净资</text><text x="1752" y="397" class="n">9.68</text><text x="1757" y="397" class="lb">流通</text><text x="1893" y="397" class="n">6.65亿</text>
<text x="1617" y="416" class="lb" textLength="50">收益(三)</text><text x="1752" y="416" class="n">0.590</text><text x="1757" y="416" class="lb" textLength="43">PE(动)</text><text x="1892" y="416" class="n">14.5</text>
<text x="1616" y="439" class="lb" textLength="144">交易状态: 闭市阶段</text><text x="1765" y="439" class="nl">15:00:00</text>
<text x="1617" y="460.500" class="lb" textLength="67">主力净额</text>
<rect x="1688.500" y="455" width="11" height="11" rx="1.500" fill="#444" stroke="#999"/><path d="M1691 458h6M1691 460.500h6M1691 463h6" stroke="#bbb"/>
<rect x="1709" y="456" width="70" height="7" fill="#00e800"/>
<text x="1802" y="460.500" class="nl g" style="font-size:14.500px;fill:#00e800" textLength="52">-1138万</text><text x="1893" y="460.500" class="n g">-3%</text>

<!-- ticks -->
<g>
<text x="1617" y="482" class="nl">14:55</text><text x="1752" y="482" class="n g">11.02</text><text x="1834" y="482" class="n y">160</text><text x="1856" y="482" class="nl g m">S</text><text x="1892" y="482" class="n d">9</text>
<text x="1752" y="500" class="n">11.03</text><text x="1834" y="500" class="n y">97</text><text x="1856" y="500" class="nl r m">B</text><text x="1892" y="500" class="n d">16</text>
<text x="1752" y="518" class="n">11.03</text><text x="1834" y="518" class="n y">114</text><text x="1856" y="518" class="nl r m">B</text><text x="1892" y="518" class="n d">13</text>
<text x="1752" y="536" class="n">11.03</text><text x="1834" y="536" class="n y">394</text><text x="1856" y="536" class="nl r m">B</text><text x="1892" y="536" class="n d">26</text>
<text x="1752" y="554" class="n g">11.02</text><text x="1834" y="554" class="n y">47</text><text x="1856" y="554" class="nl g m">S</text><text x="1892" y="554" class="n d">10</text>
<text x="1752" y="572" class="n">11.03</text><text x="1834" y="572" class="n y">158</text><text x="1856" y="572" class="nl r m">B</text><text x="1892" y="572" class="n d">13</text>
<text x="1752" y="590" class="n g">11.02</text><text x="1834" y="590" class="n y">97</text><text x="1856" y="590" class="nl g m">S</text><text x="1892" y="590" class="n d">14</text>
<text x="1752" y="608" class="n g">11.02</text><text x="1834" y="608" class="n y">67</text><text x="1856" y="608" class="nl g m">S</text><text x="1892" y="608" class="n d">8</text>
<text x="1617" y="626" class="nl">14:56</text><text x="1752" y="626" class="n g">11.02</text><text x="1834" y="626" class="n y">275</text><text x="1856" y="626" class="nl g m">S</text><text x="1892" y="626" class="n d">24</text>
<text x="1752" y="644" class="n g">11.02</text><text x="1834" y="644" class="n y">141</text><text x="1856" y="644" class="nl g m">S</text><text x="1892" y="644" class="n d">11</text>
<text x="1752" y="662" class="n g">11.02</text><text x="1834" y="662" class="n y">246</text><text x="1856" y="662" class="nl g m">S</text><text x="1892" y="662" class="n d">21</text>
<text x="1752" y="680" class="n">11.03</text><text x="1834" y="680" class="n y">320</text><text x="1856" y="680" class="nl r m">B</text><text x="1892" y="680" class="n d">34</text>
<text x="1752" y="698" class="n">11.03</text><text x="1834" y="698" class="n y">54</text><text x="1856" y="698" class="nl g m">S</text><text x="1892" y="698" class="n d">6</text>
<text x="1752" y="716" class="n">11.03</text><text x="1834" y="716" class="n y">8</text><text x="1856" y="716" class="nl g m">S</text><text x="1892" y="716" class="n d">4</text>
<text x="1752" y="734" class="n">11.03</text><text x="1834" y="734" class="n y">85</text><text x="1856" y="734" class="nl g m">S</text><text x="1892" y="734" class="n d">12</text>
<text x="1752" y="752" class="n r">11.04</text><text x="1834" y="752" class="n y">40</text><text x="1856" y="752" class="nl r m">B</text><text x="1892" y="752" class="n d">5</text>
<text x="1752" y="770" class="n">11.03</text><text x="1834" y="770" class="n y">69</text><text x="1856" y="770" class="nl g m">S</text><text x="1892" y="770" class="n d">3</text>
<text x="1752" y="788" class="n">11.03</text><text x="1834" y="788" class="n y">140</text><text x="1856" y="788" class="nl g m">S</text><text x="1892" y="788" class="n d">5</text>
<text x="1752" y="806" class="n r">11.04</text><text x="1834" y="806" class="n y">6</text><text x="1856" y="806" class="nl r m">B</text><text x="1892" y="806" class="n d">4</text>
<text x="1752" y="824" class="n r">11.04</text><text x="1834" y="824" class="n y">266</text><text x="1856" y="824" class="nl r m">B</text><text x="1892" y="824" class="n d">21</text>
<text x="1752" y="842" class="n r">11.04</text><text x="1834" y="842" class="n y">20</text><text x="1856" y="842" class="nl r m">B</text><text x="1892" y="842" class="n d">5</text>
<text x="1752" y="860" class="n r">11.04</text><text x="1834" y="860" class="n y">128</text><text x="1856" y="860" class="nl r m">B</text><text x="1892" y="860" class="n d">10</text>
<text x="1752" y="878" class="n r">11.04</text><text x="1834" y="878" class="n y">48</text><text x="1856" y="878" class="nl r m">B</text><text x="1892" y="878" class="n d">5</text>
<text x="1752" y="896" class="n">11.03</text><text x="1834" y="896" class="n y">41</text><text x="1856" y="896" class="nl g m">S</text><text x="1892" y="896" class="n d">6</text>
<text x="1752" y="914" class="n">11.03</text><text x="1834" y="914" class="n p">748</text><text x="1856" y="914" class="nl g m">S</text><text x="1892" y="914" class="n d">21</text>
<text x="1752" y="932" class="n">11.03</text><text x="1834" y="932" class="n y">141</text><text x="1856" y="932" class="nl r m">B</text><text x="1892" y="932" class="n d">8</text>
<text x="1617" y="950" class="nl">14:57</text><text x="1752" y="950" class="n">11.03</text><text x="1834" y="950" class="n y">5</text><text x="1856" y="950" class="nl g m">S</text><text x="1892" y="950" class="n d">1</text>
<text x="1617" y="968" class="nl">15:00</text><text x="1752" y="968" class="n">11.03</text><text x="1834" y="968" class="n p">2347</text><text x="1892" y="968" class="n d">176</text>
</g>

<!-- sidebar icons -->
<g fill="#e8f2ff" stroke="#3f86e0" stroke-width="1.300">
<path d="M1901 42l7-6v3h7v6h-7v3z"/>
<path d="M1908 55l6 7h-3v7h-6v-7h-3z"/>
<path d="M1908 96l6-7h-3v-7h-6v7h-3z"/>
</g>
<g fill="#fff" stroke="#3f86e0" stroke-width="1.200">
<rect x="1900.500" y="104" width="15" height="15"/><rect x="1900.500" y="126" width="15" height="15"/><rect x="1900.500" y="148" width="15" height="15"/><rect x="1900.500" y="171" width="15" height="15"/><rect x="1900.500" y="194" width="15" height="15"/><rect x="1900.500" y="219" width="15" height="15"/><rect x="1900.500" y="241" width="15" height="15"/><rect x="1900.500" y="265" width="15" height="15"/><rect x="1900.500" y="289" width="15" height="15"/><rect x="1900.500" y="311" width="15" height="15"/><rect x="1900.500" y="334" width="15" height="15"/><rect x="1900.500" y="365" width="15" height="15"/><rect x="1900.500" y="489" width="15" height="15"/><rect x="1900.500" y="511" width="15" height="15"/>
</g>
<path d="M1903 107h10M1903 110h10M1903 113h7" stroke="#e04030" fill="none"/>
<path d="M1902 128h12v11h-12zM1905 128v11M1908 128v11M1911 128v11M1902 132h12M1902 135h12" stroke="#2060c0" fill="none" stroke-dasharray="2 1"/>
<path d="M1902 160l3-4 3 1 6-7" stroke="#e03020" fill="none" stroke-width="1.300"/>
<path d="M1905 173v11M1908 173v11M1912 173v11" stroke="#333"/><rect x="1903.500" y="175" width="3" height="6" fill="#e03020"/><rect x="1907" y="177" width="3" height="5" fill="#20a040"/><rect x="1910.500" y="175" width="3" height="7" fill="#e03020"/>
<path d="M1904 197h7v10h-7zM1906 199h7v8" stroke="#3f86e0" fill="none"/>
<text x="1908" y="226.500" class="m b" style="font-size:9.500px;fill:#1c50b8">F10</text>
<path d="M1903 244h4v4h-4zM1909 249h4v4h-4zM1905 248v3h4" stroke="#e09020" fill="none"/>
<path d="M1904 268h8v10h-8zM1906 271h4M1906 273h4M1906 275h4" stroke="#e87020" fill="none"/>
<text x="1908" y="296.500" class="m b" style="font-size:9.500px;fill:#1c50b8">F12</text>
<text x="1908" y="318.500" class="m" style="font-size:10px;fill:#1c50b8;font-style:italic">fx</text>
<circle cx="1908" cy="341.500" r="3.800" fill="none" stroke="#1c50b8" stroke-width="1.200"/>
<path d="M1899 357h18M1899 479h18" stroke="#bbb"/>
<path d="M1902 370l3 2 3-2 3 2 3-2M1902 375l3 2 3-2 3 2 3-2" stroke="#e03020" fill="none"/>
<text x="1908" y="395" class="m b" style="font-size:10.500px;fill:#1c50b8" textLength="15">RSI</text>
<text x="1908" y="418" class="m b" style="font-size:16px;fill:#c83030">S</text>
<path d="M1908 434l3.500 3.500h-2v3h3v-2l3.500 3.500-3.500 3.500v-2h-3v3h2l-3.500 3.500-3.500-3.500h2v-3h-3v2l-3.500-3.500 3.500-3.500v2h3v-3h-2z" fill="#1c50b8"/>
<path d="M1902 471l2-4 9-8 3 3-9 8z" fill="#e0a040" stroke="#a06020"/>
<text x="1908" y="496.500" class="m b" style="font-size:10px;fill:#1c50b8">F5</text>
<path d="M1903 517a5 5 0 0 1 9-2M1913 520a5 5 0 0 1-9 2" stroke="#30a040" fill="none" stroke-width="1.800"/>
<text x="1908" y="541" class="sb">1</text><text x="1908" y="564" class="sb">5</text><text x="1908" y="587" class="sb">15</text><text x="1908" y="610" class="sb">30</text><text x="1908" y="633" class="sb">60</text>
<rect x="1897.500" y="646" width="21" height="22" fill="#f6f6f6" stroke="#c8c8c8"/>
<text x="1908" y="657" class="sb" style="font-size:14px">日</text><text x="1908" y="679" class="sb" style="font-size:14px">周</text><text x="1908" y="702" class="sb" style="font-size:14px">月</text><text x="1908" y="725" class="sb">N</text><text x="1908" y="748" class="sb" style="font-size:14px">多</text><text x="1908" y="772" class="sb" style="font-size:14px">季</text><text x="1908" y="794" class="sb" style="font-size:14px">年</text>
</svg>
</body></html>
